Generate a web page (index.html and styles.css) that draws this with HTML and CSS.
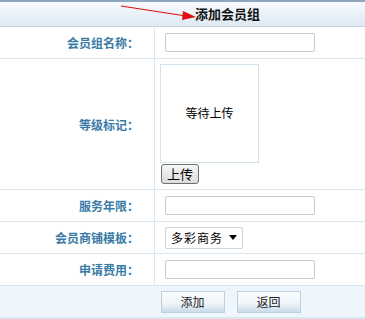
FILE: index.html
```html
<!DOCTYPE html>
<html lang="zh-CN">

<head>
    <meta charset="UTF-8">
    <title>添加会员组</title>
    <link rel="stylesheet" href="styles.css">
</head>

<body>

    <div class="panel">
        <!-- 标题栏 -->
        <div class="panel-title">
            <span>添加会员组</span>
            <svg class="arrow" width="80" height="16" viewBox="0 0 80 16">
                <line x1="1" y1="1" x2="66" y2="11" stroke="#e01010" stroke-width="1.2" />
                <polygon points="63,6 76,12 62,15" fill="#e01010" />
            </svg>
        </div>

        <table class="form-table">
            <tr class="row">
                <td class="label">会员组名称：</td>
                <td class="field"><input type="text" class="text-input"></td>
            </tr>
            <tr class="row row-tall">
                <td class="label">等级标记：</td>
                <td class="field field-top">
                    <div class="preview">等待上传</div>
                    <button type="button" class="upload-btn">上传</button>
                </td>
            </tr>
            <tr class="row">
                <td class="label">服务年限：</td>
                <td class="field"><input type="text" class="text-input"></td>
            </tr>
            <tr class="row">
                <td class="label">会员商铺模板：</td>
                <td class="field">
                    <div class="select">
                        <span>多彩商务</span>
                        <i class="caret"></i>
                    </div>
                </td>
            </tr>
            <tr class="row">
                <td class="label">申请费用：</td>
                <td class="field"><input type="text" class="text-input"></td>
            </tr>
            <tr class="row footer-row">
                <td></td>
                <td class="field">
                    <div class="buttons">
                        <button type="button" class="btn">添加</button>
                        <button type="button" class="btn">返回</button>
                    </div>
                </td>
            </tr>
        </table>
    </div>

</body>

</html>
```

FILE: styles.css
```css
body {
    margin: 0;
    padding: 0;
    background-color: #ffffff;
    font-family: "Noto Sans CJK SC", "Liberation Sans", sans-serif;
    font-size: 12px;
    color: #000;
}

.panel {
    width: 365px;
}

/* 标题栏 */
.panel-title {
    position: relative;
    height: 24px;
    border-top: 2px solid #8ea7bf;
    border-bottom: 1px solid #c5d3de;
    background: linear-gradient(#f7fafd, #dde9f3);
    padding-left: 195px;
    line-height: 24px;
    font-size: 13px;
    font-weight: bold;
    color: #111;
}

.panel-title .arrow {
    position: absolute;
    left: 120px;
    top: 3px;
}

.form-table {
    width: 365px;
    border-collapse: collapse;
}

.form-table td {
    padding: 0;
    border-bottom: 1px solid #d9e7f2;
}

.row td {
    height: 31px;
}

.row-tall td {
    height: 130px;
}

.label {
    width: 139px;
    padding-right: 15px !important;
    border-right: 1px solid #d9e7f2;
    text-align: right;
    font-weight: bold;
    font-size: 12px;
    color: #3a7aa6;
}

.field {
    padding-left: 10px !important;
}

.row-tall .field-top {
    vertical-align: top;
    height: 125px;
    padding-top: 5px !important;
}

.text-input {
    display: block;
    width: 148px;
    height: 17px;
    margin: 0;
    padding: 0;
    border: 1px solid #c9ccce;
    border-radius: 2px;
    background: #fff;
}

.preview {
    display: flex;
    align-items: center;
    justify-content: center;
    width: 97px;
    height: 95px;
    padding-bottom: 2px;
    margin-left: -5px;
    border: 1px solid #d3e3ec;
    font-size: 12px;
}

.upload-btn {
    display: block;
    margin: 1px 0 0 -4px;
    padding: 0;
    width: 38px;
    height: 20px;
    border: 1px solid #707070;
    border-radius: 3px;
    background: linear-gradient(#f6f6f6, #dcdcdc);
    font-family: "Noto Sans CJK SC", sans-serif;
    font-size: 13px;
    line-height: 16px;
    color: #000;
}

.select {
    display: flex;
    align-items: center;
    box-sizing: border-box;
    width: 78px;
    height: 22px;
    padding-left: 5px;
    border: 1px solid #d0d3d6;
    border-radius: 2px;
    font-size: 12px;
}

.select span {
    flex: 1;
    letter-spacing: 1px;
}

.caret {
    width: 0;
    height: 0;
    margin-right: 5px;
    border-left: 4px solid transparent;
    border-right: 4px solid transparent;
    border-top: 5px solid #000;
}

.footer-row td {
    background-color: #eef5fc;
    border-top: 1px solid #d9e7f2;
    border-bottom: 2px solid #d9e7f2;
}

.buttons {
    display: flex;
    gap: 12px;
    margin-left: -4px;
}

.btn {
    width: 64px;
    height: 22px;
    padding: 0;
    border: 1px solid #bcd0de;
    background: linear-gradient(#fbfdfe 0%, #f0f5f9 55%, #c9dbea 100%);
    font-family: "Noto Sans CJK SC", sans-serif;
    font-size: 12px;
    color: #222;
}
```
